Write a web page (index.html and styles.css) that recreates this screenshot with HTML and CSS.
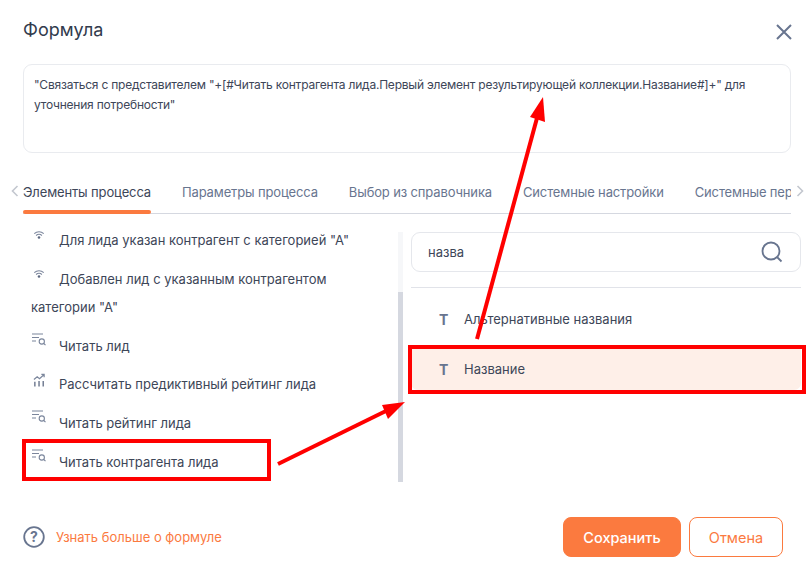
FILE: index.html
```html
<!DOCTYPE html>
<html lang="ru">
<head>
<meta charset="utf-8">
<title>Формула</title>
<link rel="stylesheet" href="styles.css">
</head>
<body>
<div class="modal">
  <header class="head">
    <h1 class="title">Формула</h1>
    <svg class="close" width="16" height="16" viewBox="0 0 16 16"><path d="M1 1l14 14M15 1L1 15" fill="none" stroke="#68758f" stroke-width="2"/></svg>
  </header>
  <div class="formula">"Связаться с представителем "+[#Читать контрагента лида.Первый элемент результирующей коллекции.Название#]+" для уточнения потребности"</div>
  <nav class="tabs">
    <svg class="chev chev-l" width="8" height="12" viewBox="0 0 8 12"><path d="M6.5 1L1.5 6l5 5" fill="none" stroke="#c3c7cf" stroke-width="1.6"/></svg>
    <div class="tab-strip">
      <span class="tab tab-active">Элементы процесса</span>
      <span class="tab">Параметры процесса</span>
      <span class="tab">Выбор из справочника</span>
      <span class="tab">Системные настройки</span>
      <span class="tab">Системные переменные</span>
    </div>
    <svg class="chev chev-r" width="8" height="12" viewBox="0 0 8 12"><path d="M1.5 1l5 5-5 5" fill="none" stroke="#c3c7cf" stroke-width="1.6"/></svg>
  </nav>
  <div class="panes">
    <section class="left">
      <ul class="list">
        <li class="item"><svg class="ico ico-wifi" width="12" height="11" viewBox="0 0 14 12"><path d="M1.500 3.800C4.600 1 9.400 1 12.500 3.800M3.600 6C5.600 4.300 8.400 4.300 10.400 6" fill="none" stroke="#7b869c" stroke-width="1.300"/><circle cx="7" cy="8.300" r="1.500" fill="#5d6880"/></svg>Для лида указан контрагент с категорией "А"</li>
        <li class="item"><svg class="ico ico-wifi" width="12" height="11" viewBox="0 0 14 12"><path d="M1.500 3.800C4.600 1 9.400 1 12.500 3.800M3.600 6C5.600 4.300 8.400 4.300 10.400 6" fill="none" stroke="#7b869c" stroke-width="1.300"/><circle cx="7" cy="8.300" r="1.500" fill="#5d6880"/></svg>Добавлен лид с указанным контрагентом категории "А"</li>
        <li class="item"><svg class="ico" width="14" height="13" viewBox="0 0 14 13"><path d="M0 1h11M0 4.500h7M0 8h4" fill="none" stroke="#7b869c" stroke-width="1.200"/><circle cx="9.800" cy="8.500" r="2.600" fill="none" stroke="#7b869c" stroke-width="1.100"/><path d="M11.800 10.500l1.700 1.700" stroke="#7b869c" stroke-width="1.100"/></svg>Читать лид</li>
        <li class="item"><svg class="ico ico-chart" width="13" height="14" viewBox="0 0 14 14"><path d="M1 6.500L4.500 3.500 7 5.500 12 1M9 1h3v3" fill="none" stroke="#7b869c" stroke-width="1.300"/><path d="M2 9v5M6.500 8v6M11 8v6" fill="none" stroke="#6a758c" stroke-width="1.500"/></svg>Рассчитать предиктивный рейтинг лида</li>
        <li class="item"><svg class="ico" width="14" height="13" viewBox="0 0 14 13"><path d="M0 1h11M0 4.500h7M0 8h4" fill="none" stroke="#7b869c" stroke-width="1.200"/><circle cx="9.800" cy="8.500" r="2.600" fill="none" stroke="#7b869c" stroke-width="1.100"/><path d="M11.800 10.500l1.700 1.700" stroke="#7b869c" stroke-width="1.100"/></svg>Читать рейтинг лида</li>
        <li class="item"><svg class="ico" width="14" height="13" viewBox="0 0 14 13"><path d="M0 1h11M0 4.500h7M0 8h4" fill="none" stroke="#7b869c" stroke-width="1.200"/><circle cx="9.800" cy="8.500" r="2.600" fill="none" stroke="#7b869c" stroke-width="1.100"/><path d="M11.800 10.500l1.700 1.700" stroke="#7b869c" stroke-width="1.100"/></svg>Читать контрагента лида</li>
      </ul>
      <div class="scroll"><div class="thumb"></div></div>
    </section>
    <section class="right">
      <div class="search">
        <span class="query">назва</span>
        <svg width="22" height="22" viewBox="0 0 22 22"><circle cx="10" cy="10" r="8.500" fill="none" stroke="#68758f" stroke-width="1.800"/><path d="M16 16l4.500 4.500" stroke="#68758f" stroke-width="1.800"/></svg>
      </div>
      <div class="rule"></div>
      <div class="row"><span class="t">T</span>Альтернативные названия</div>
      <div class="row row-sel"><span class="t">T</span>Название</div>
    </section>
  </div>
  <footer class="foot">
    <div class="help">
      <svg width="22" height="22" viewBox="0 0 22 22"><circle cx="11" cy="11" r="9.800" fill="none" stroke="#68758f" stroke-width="1.800"/><text x="11" y="15.500" text-anchor="middle" class="qmark">?</text></svg>
      <span class="link">Узнать больше о формуле</span>
    </div>
    <div class="btns">
      <button class="btn btn-save">Сохранить</button>
      <button class="btn btn-cancel">Отмена</button>
    </div>
  </footer>
</div>
<svg class="marks" width="812" height="571" viewBox="0 0 812 571">
  <rect x="24" y="441" width="245" height="38" fill="none" stroke="#f00" stroke-width="4"/>
  <rect x="410" y="347" width="394" height="45" fill="none" stroke="#f00" stroke-width="4"/>
  <path d="M278 464L392 408" stroke="#f00" stroke-width="4" fill="none"/>
  <path d="M405 402L382 405 388 419Z" fill="#f00"/>
  <path d="M477 339L537 118" stroke="#f00" stroke-width="4" fill="none"/>
  <path d="M543 97L530 117 545 122Z" fill="#f00"/>
</svg>
</body>
</html>
```
FILE: styles.css
```css
* { box-sizing: border-box; }
html, body { margin: 0; height: 100%; }
body { background: #fff; font-family: Inter, "Noto Sans", sans-serif; color: #3d4658; overflow: hidden; position: relative; }
.modal { width: 812px; height: 571px; padding: 17px 21px 0 23px; display: flex; flex-direction: column; }
.head { display: flex; justify-content: space-between; align-items: center; height: 26px; }
.title { margin: 0; font-size: 18px; font-weight: 400; color: #323b4d; line-height: 26px; }
.close { margin-top: 3px; margin-right: -1px; }
.formula { margin-top: 21px; height: 89px; border: 1px solid #e9ebef; border-radius: 9px; padding: 10px; font-size: 12px; line-height: 20px; color: #3d4658; letter-spacing: -0.215px; }
.tabs { position: relative; margin-top: 26px; height: 35px; border-bottom: 1.500px solid #d5d8e0; }
.tab-strip { display: flex; gap: 31px; overflow: hidden; height: 35px; white-space: nowrap; }
.tab { font-size: 13px; line-height: 26px; color: #68758f; flex: none; height: 35px; letter-spacing: -0.14px; }
.tab-active { color: #3d4658; position: relative; }
.tab-active::after { content: ""; position: absolute; left: 0; right: 0; bottom: 0; height: 4px; background: #fb7a3f; border-radius: 2px; }
.chev { position: absolute; top: 6px; }
.chev-l { left: -12px; }
.chev-r { right: -13px; }
.panes { display: flex; height: 270px; }
.left { width: 388px; display: flex; position: relative; flex: none; }
.list { list-style: none; margin: 0; padding: 12px 0 0 8px; flex: 1; }
.item { font-size: 13px; line-height: 28px; padding-bottom: 10.75px; color: #3d4658; position: relative; text-indent: 28px; width: 335px; }
.ico { position: absolute; left: 0; top: 1px; margin-left: 1px; }
.ico-wifi { top: 4px; margin-left: 2px; }
.ico-chart { top: 3px; margin-left: 2px; }
.scroll { position: absolute; left: 375px; top: 18px; width: 5px; height: 250px; background: #f6f7f9; }
.thumb { margin-top: 60px; height: 190px; background: #d5d8e0; }
.right { width: 390px; flex: none; padding-top: 18px; }
.search { height: 40px; border: 1px solid #e5e7ec; border-radius: 9px; display: flex; align-items: center; justify-content: space-between; padding: 0 17px 0 16px; }
.query { font-size: 13px; color: #3d4658; }
.rule { height: 1px; background: #e1e3e9; margin-top: 15px; }
.row { height: 42px; display: flex; align-items: center; padding-left: 28px; font-size: 13px; color: #3d4658; margin-top: 10px; }
.row + .row { margin-top: 8px; }
.row-sel { background: #feefe8; border-radius: 0 0 7px 7px; }
.t { width: 25px; font-weight: 700; font-size: 14px; color: #68758f; }
.foot { display: flex; justify-content: space-between; align-items: center; margin-top: 33px; height: 40px; padding-right: 8px; }
.help { display: flex; align-items: center; gap: 11px; }
.qmark { font-size: 14px; font-weight: 700; fill: #68758f; font-family: Inter, sans-serif; }
.link { font-size: 13px; color: #fb7a3f; }
.btns { display: flex; gap: 8px; }
.btn { height: 40px; border-radius: 8px; font-family: inherit; font-size: 14.5px; border: 1px solid #fb7a3f; }
.btn-save { width: 118px; background: #fb7a3f; color: #fff; font-weight: 500; }
.btn-cancel { width: 94px; background: #fff; color: #fb7a3f; }
.marks { position: absolute; left: 0; top: 0; pointer-events: none; }
```
